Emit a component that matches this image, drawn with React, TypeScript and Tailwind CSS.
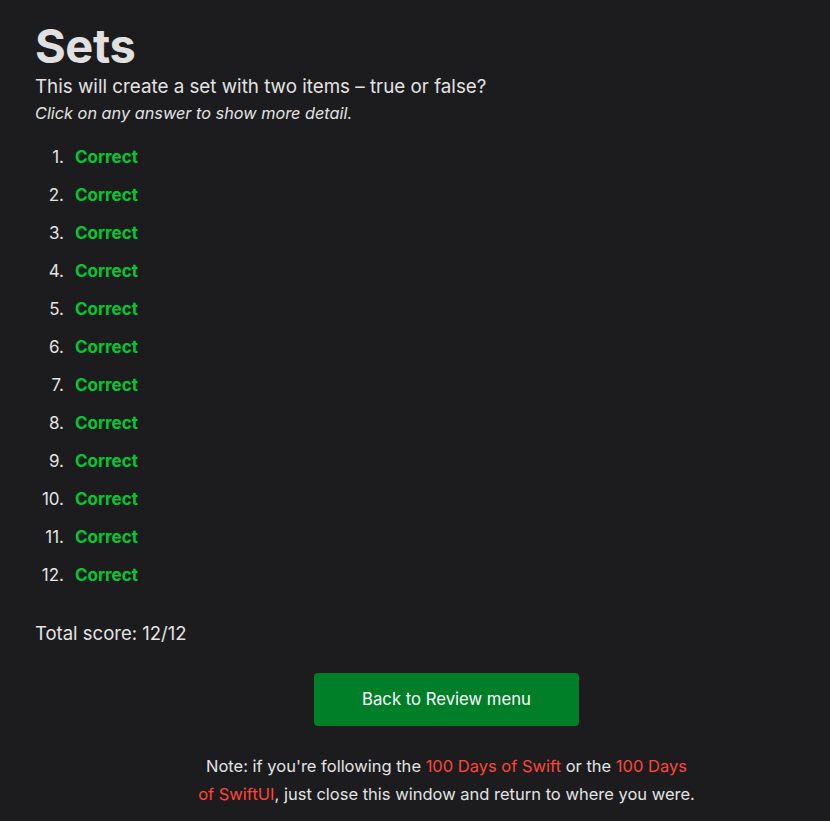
// Review results page for a single quiz topic

const answers = Array.from({ length: 12 }, (_, i) => ({ id: i + 1, correct: true }));

export default function App() {
  return (
    <main
      className="min-h-[821px] bg-[#1c1c1e] px-[35px] pt-[18px] text-[#e3e3e3]"
      style={{ fontFamily: "Inter, 'Noto Sans', sans-serif" }}
    >
      <h1 className="text-[47px] font-bold leading-[56px] tracking-[-0.4px] text-[#e0e0e0]">Sets</h1>
      <p className="text-[18.8px] leading-[26px]">This will create a set with two items – true or false?</p>
      <p className="mt-[1px] text-[16.3px] italic leading-[24px]">Click on any answer to show more detail.</p>

      <ol className="mt-[21px] flex flex-col gap-[16px]">
        {answers.map((answer) => (
          <li key={answer.id} className="flex items-center text-[17px] leading-[22px]">
            <span className="w-[32px] pr-[3px] text-right">{answer.id}.</span>
            <button className="ml-[8px] font-bold text-[#00c834]">Correct</button>
          </li>
        ))}
      </ol>

      <p className="mt-[34px] text-[18.5px] leading-[26px]">Total score: 12/12</p>

      <div className="flex flex-col items-center pl-[63px]">
        <button className="mt-[27px] h-[53px] w-[265px] rounded-[4px] bg-[#007f28] text-[16.7px] text-white">
          Back to Review menu
        </button>
        <p className="mt-[26px] max-w-[498px] text-center text-[16.5px] leading-[28px]">
          Note: if you're following the <a className="text-[#ff453a]">100 Days of Swift</a> or the{" "}
          <a className="text-[#ff453a]">100 Days of SwiftUI</a>, just close this window and return to where you were.
        </p>
      </div>
    </main>
  );
}
